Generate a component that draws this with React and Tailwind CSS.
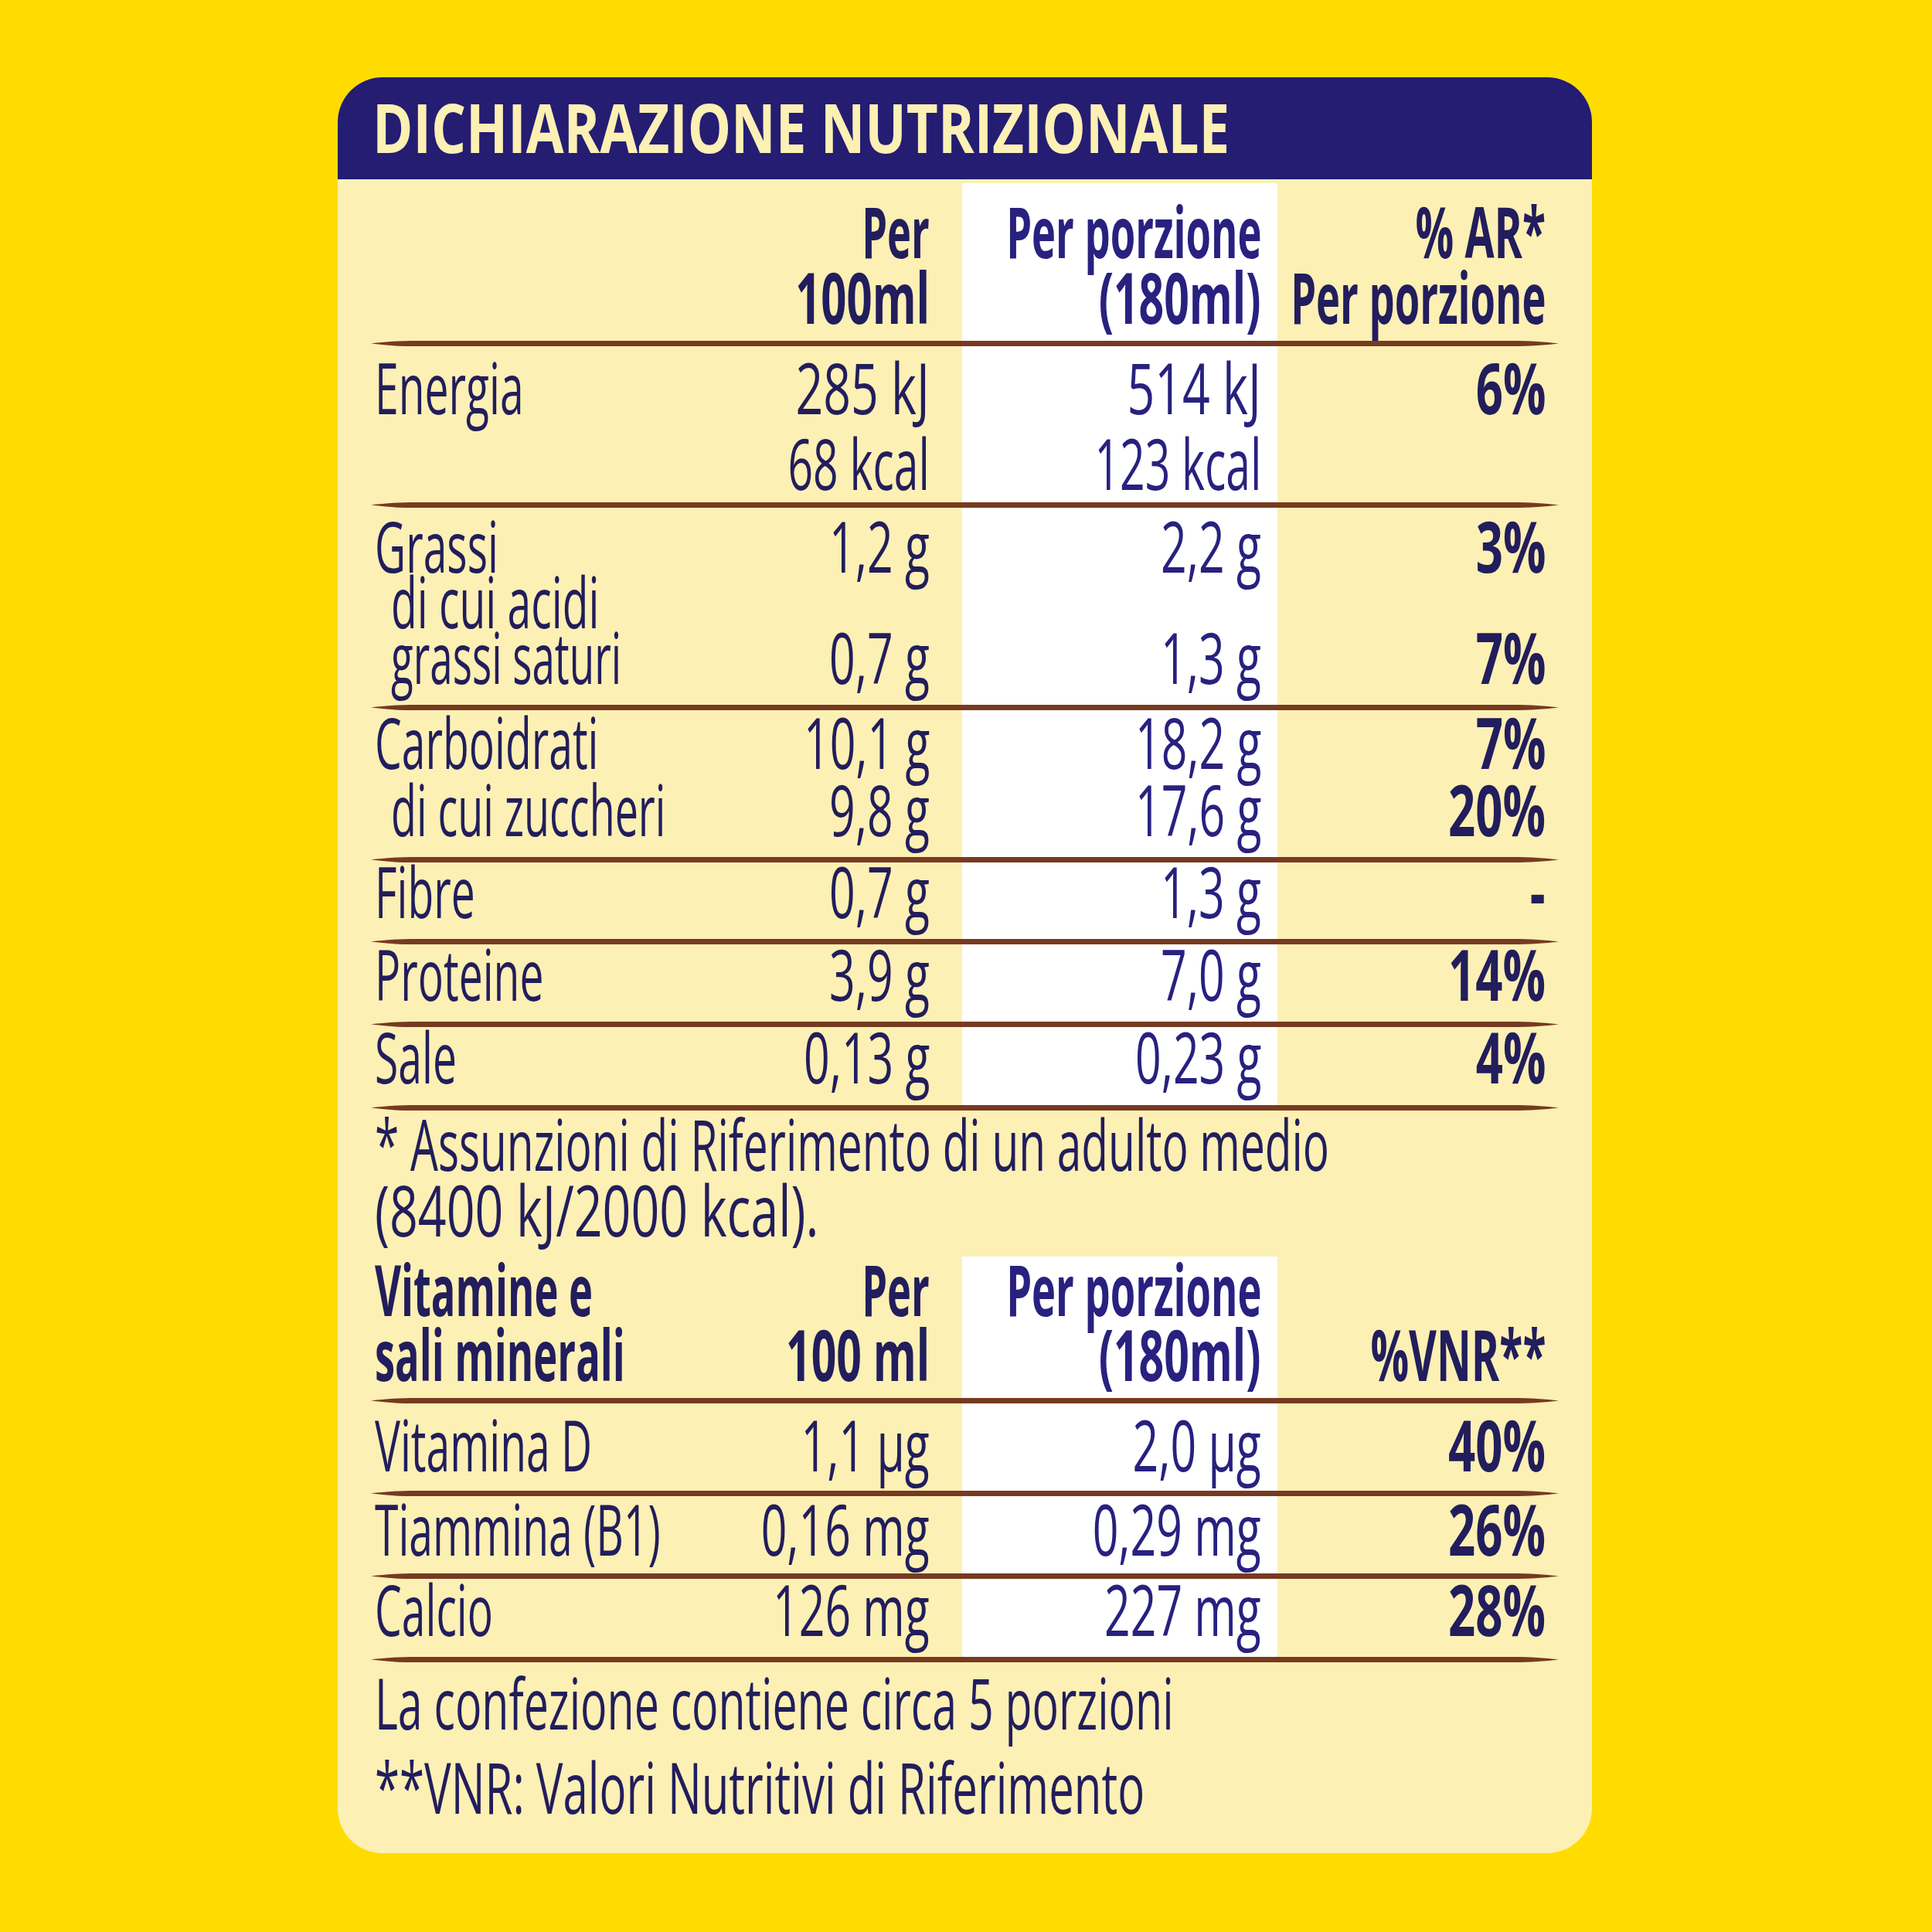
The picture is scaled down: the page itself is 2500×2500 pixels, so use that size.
import React from 'react';

// tapered brown rule between rows
const Rule = () => (
    <svg className="block w-full h-[7px]" viewBox="0 0 1535 7" preserveAspectRatio="none">
        <path
            d="M0 3.5 C 18 1.2 36 0 60 0 L 1475 0 C 1499 0 1517 1.2 1535 3.5 C 1517 5.8 1499 7 1475 7 L 60 7 C 36 7 18 5.8 0 3.5 Z"
            fill="#763a20"
        />
    </svg>
);

const T = ({ children, bold, right, s }) => (
    <span
        className={[
            'shrink-0 whitespace-nowrap',
            right ? 'origin-right' : 'origin-left',
            bold ? 'font-bold' : 'font-normal',
            s || (bold ? 'scale-x-[0.57]' : 'scale-x-[0.6]'),
        ].join(' ')}
    >
        {children}
    </span>
);

const Lines = ({ items, lead, right, bold, s, className = '' }) => (
    <div className={className}>
        {items.map((it, i) => {
            const obj = it && typeof it === 'object';
            const text = obj ? it.t : it;
            return (
                <div
                    key={i}
                    className={`flex ${right ? 'justify-end' : 'justify-start'} ${lead} ${obj && it.indent ? 'pl-[21px]' : ''}`}
                >
                    {text ? (
                        <T bold={bold} right={right} s={(obj && it.s) || s}>
                            {text}
                        </T>
                    ) : (
                        <span>{'\u00a0'}</span>
                    )}
                </div>
            );
        })}
    </div>
);

const Row = ({ h, lead, off, label = [], a = [], b = [], c = [], bold = false }) => {
    const num = bold ? undefined : 'scale-x-[0.64]';
    const pct = bold ? undefined : 'scale-x-[0.67]';
    return (
        <div className={`flex ${h}`}>
            <div className="w-[400px] shrink-0 pl-[5px]">
                <Lines items={label} lead={lead} bold={bold} className={off} />
            </div>
            <div className="w-[365px] shrink-0 pr-[42px]">
                <Lines items={a} lead={lead} bold={bold} s={num} right className={off} />
            </div>
            <div className="w-[408px] shrink-0 bg-white pr-[21px] text-[#28217f]">
                <Lines items={b} lead={lead} bold={bold} s={num} right className={off} />
            </div>
            <div className="w-[362px] shrink-0 pr-[15px]">
                <Lines items={c} lead={lead} bold s={pct} right className={off} />
            </div>
        </div>
    );
};

export default function App() {
    return (
        <div className="w-[2500px] h-[2500px] bg-[#ffdc00] pt-[100px] pl-[437px] font-['Open_Sans',sans-serif] text-[#221d5c]">
            <div className="w-[1623px] h-[2298px] rounded-[58px] overflow-hidden bg-[#fcf0b4]">
                <div className="h-[132px] bg-[#241d72] pl-[45px] text-[88px] leading-[128px] font-bold text-[#fcf0b4]">
                    <span className="inline-block origin-left scale-x-[0.805] whitespace-nowrap">
                        DICHIARAZIONE NUTRIZIONALE
                    </span>
                </div>

                <div className="px-[43px] pt-[5px] text-[92px]">
                    {/* Main table */}
                    <Row
                        h="h-[204px]"
                        lead="leading-[85px]"
                        off="mt-[19px]"
                        bold
                        a={['Per', { t: '100ml', s: 'scale-x-[0.63]' }]}
                        b={['Per porzione', { t: '(180ml)', s: 'scale-x-[0.62]' }]}
                        c={[{ t: '% AR*', s: 'scale-x-[0.6]' }, 'Per porzione']}
                    />
                    <Rule />
                    <Row
                        h="h-[202px]"
                        lead="leading-[98px]"
                        off="mt-[4px]"
                        label={['Energia']}
                        a={[{ t: '285 kJ', s: 'scale-x-[0.68]' }, { t: '68 kcal', s: 'scale-x-[0.62]' }]}
                        b={[{ t: '514 kJ', s: 'scale-x-[0.68]' }, { t: '123 kcal', s: 'scale-x-[0.62]' }]}
                        c={['6%']}
                    />
                    <Rule />
                    <Row
                        h="h-[255px]"
                        lead="leading-[72px]"
                        off="mt-[13px]"
                        label={[
                            'Grassi',
                            { t: 'di cui acidi', indent: true },
                            { t: 'grassi saturi', indent: true, s: 'scale-x-[0.575]' },
                        ]}
                        a={['1,2 g', null, '0,7 g']}
                        b={['2,2 g', null, '1,3 g']}
                        c={['3%', null, '7%']}
                    />
                    <Rule />
                    <Row
                        h="h-[190px]"
                        lead="leading-[87px]"
                        off="-mt-[3px]"
                        label={['Carboidrati', { t: 'di cui zuccheri', indent: true, s: 'scale-x-[0.585]' }]}
                        a={['10,1 g', '9,8 g']}
                        b={['18,2 g', '17,6 g']}
                        c={['7%', '20%']}
                    />
                    <Rule />
                    <Row h="h-[99px]" lead="leading-[74px]" off="mt-0" label={['Fibre']} a={['0,7 g']} b={['1,3 g']} c={['-']} />
                    <Rule />
                    <Row h="h-[100px]" lead="leading-[74px]" off="mt-[1px]" label={['Proteine']} a={['3,9 g']} b={['7,0 g']} c={['14%']} />
                    <Rule />
                    <Row h="h-[101px]" lead="leading-[74px]" off="mt-[1px]" label={['Sale']} a={['0,13 g']} b={['0,23 g']} c={['4%']} />
                    <Rule />

                    {/* Footnote */}
                    <div className="h-[189px] pl-[5px]">
                        <Lines
                            items={[
                                { t: '* Assunzioni di Riferimento di un adulto medio', s: 'scale-x-[0.617]' },
                                { t: '(8400 kJ/2000 kcal).', s: 'scale-x-[0.7]' },
                            ]}
                            lead="leading-[85px]"
                        />
                    </div>

                    {/* Vitamins */}
                    <Row
                        h="h-[183px]"
                        lead="leading-[84px]"
                        off="mt-0"
                        bold
                        label={['Vitamine e', 'sali minerali']}
                        a={['Per', { t: '100 ml', s: 'scale-x-[0.62]' }]}
                        b={['Per porzione', { t: '(180ml)', s: 'scale-x-[0.62]' }]}
                        c={[null, { t: '%VNR**', s: 'scale-x-[0.6]' }]}
                    />
                    <Rule />
                    <Row h="h-[113px]" lead="leading-[80px]" off="mt-[13px]" label={['Vitamina D']} a={['1,1 µg']} b={['2,0 µg']} c={['40%']} />
                    <Rule />
                    <Row h="h-[100px]" lead="leading-[74px]" off="mt-[5px]" label={['Tiammina (B1)']} a={['0,16 mg']} b={['0,29 mg']} c={['26%']} />
                    <Rule />
                    <Row h="h-[101px]" lead="leading-[74px]" off="mt-[2px]" label={['Calcio']} a={['126 mg']} b={['227 mg']} c={['28%']} />
                    <Rule />

                    <div className="h-[247px] pl-[5px]">
                        <Lines items={['La confezione contiene circa 5 porzioni']} lead="leading-[104px]" s="scale-x-[0.622]" />
                        <Lines items={['**VNR: Valori Nutritivi di Riferimento']} lead="leading-[114px]" s="scale-x-[0.632]" />
                    </div>
                </div>
            </div>
        </div>
    );
}
